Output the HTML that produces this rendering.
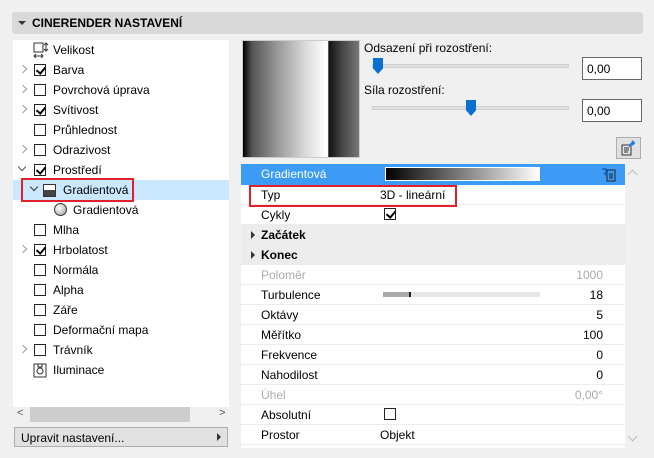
<!DOCTYPE html>
<html><head><meta charset="utf-8"><style>
*{margin:0;padding:0;box-sizing:border-box}
body{width:654px;height:458px;background:#f0f0f0;font-family:"Liberation Sans",sans-serif;font-size:12px;color:#000;position:relative;overflow:hidden}
.a{position:absolute}
.hdr{left:12px;top:12px;width:631px;height:22px;background:#d9d9d9;border-radius:3px}
.hdr span{position:absolute;left:20px;top:4px;font-weight:bold;font-size:12px}
.tri{position:absolute;left:6px;top:9px;width:0;height:0;border-left:4px solid transparent;border-right:4px solid transparent;border-top:4px solid #333}
.tree{left:13px;top:40px;width:216px;height:367px;background:#fff}
.row{position:absolute;left:0;width:216px;height:20px}
.row .t{position:absolute;left:40px;top:3px}
.cb{position:absolute;left:21px;top:4px;width:12px;height:12px;border:1px solid #222;background:#fff}
.cb.c::after{content:"";position:absolute;left:3px;top:0px;width:4px;height:7px;border-right:2px solid #000;border-bottom:2px solid #000;transform:rotate(40deg)}
.ch{position:absolute;left:7px;top:6px;width:6px;height:6px;border-right:1.5px solid #999;border-top:1.5px solid #999;transform:rotate(45deg)}
.ch.d{transform:rotate(135deg);left:6px;top:4px;border-color:#555}
.tbl{left:241px;top:164px;width:384px;height:284px;background:#fff}
.tr{position:absolute;left:0;width:384px;height:20px;border-bottom:1px solid #ececec}
.tr .l{position:absolute;left:20px;top:3px}
.tr .v{position:absolute;right:22px;top:3px}
.tr .m{position:absolute;left:139px;top:3px}
.g{color:#aaa}
.inp{width:60px;height:23px;background:#fff;border:1px solid #666}
.inp span{position:absolute;left:4px;top:4px}
.track{height:4px;background:#e0e0e0;border:1px solid #d0d0d0}
.thumb{width:10px;height:16px;background:#0a6fcf;clip-path:polygon(0 0,100% 0,100% 65%,50% 100%,0 65%)}
</style></head><body>
<div class="a hdr"><div class="tri"></div><span>CINERENDER NASTAVENÍ</span></div>

<div class="a tree">
 <div class="row" style="top:0"><svg class="a" style="left:20px;top:2px" width="16" height="16"><rect x="1" y="1" width="9" height="9" fill="none" stroke="#333"/><path d="M13 1v8M11 3l2-2 2 2M11 7l2 2 2-2M1 14h9M3 12l-2 2 2 2M8 12l2 2-2 2" stroke="#333" fill="none"/></svg><span class="t">Velikost</span></div>
 <div class="row" style="top:20px"><div class="ch"></div><div class="cb c"></div><span class="t">Barva</span></div>
 <div class="row" style="top:40px"><div class="ch"></div><div class="cb"></div><span class="t">Povrchová úprava</span></div>
 <div class="row" style="top:60px"><div class="ch"></div><div class="cb c"></div><span class="t">Svítivost</span></div>
 <div class="row" style="top:80px"><div class="cb"></div><span class="t">Průhlednost</span></div>
 <div class="row" style="top:100px"><div class="ch"></div><div class="cb"></div><span class="t">Odrazivost</span></div>
 <div class="row" style="top:120px"><div class="ch d"></div><div class="cb c"></div><span class="t">Prostředí</span></div>
 <div class="row" style="top:140px;background:#cce8ff"><div class="ch d" style="left:18px;border-color:#333"></div><div class="a" style="left:30px;top:4px;width:13px;height:13px;border:1px solid #333;background:linear-gradient(#fff 45%,#444 45%)"></div><span class="t" style="left:50px">Gradientová</span></div>
 <div class="a" style="left:8px;top:138px;width:113px;height:24px;border:2px solid #e0212a"></div>
 <div class="row" style="top:160px"><div class="a" style="left:41px;top:3px;width:13px;height:13px;border-radius:50%;border:1px solid #333;background:radial-gradient(circle at 35% 35%,#fff,#999)"></div><span class="t" style="left:60px">Gradientová</span></div>
 <div class="row" style="top:180px"><div class="cb"></div><span class="t">Mlha</span></div>
 <div class="row" style="top:200px"><div class="ch"></div><div class="cb c"></div><span class="t">Hrbolatost</span></div>
 <div class="row" style="top:220px"><div class="cb"></div><span class="t">Normála</span></div>
 <div class="row" style="top:240px"><div class="cb"></div><span class="t">Alpha</span></div>
 <div class="row" style="top:260px"><div class="cb"></div><span class="t">Záře</span></div>
 <div class="row" style="top:280px"><div class="cb"></div><span class="t">Deformační mapa</span></div>
 <div class="row" style="top:300px"><div class="ch"></div><div class="cb"></div><span class="t">Trávník</span></div>
 <div class="row" style="top:320px"><svg class="a" style="left:20px;top:2px" width="14" height="16"><rect x="1" y="2" width="12" height="13" fill="none" stroke="#333"/><circle cx="7" cy="9" r="3" fill="none" stroke="#333"/><path d="M5 2v3h4V2" stroke="#333" fill="none"/></svg><span class="t">Iluminace</span></div>
</div>
<div class="a" style="left:13px;top:407px;width:216px;height:15px;background:#f0f0f0"></div>
<div class="a" style="left:30px;top:407px;width:160px;height:15px;background:#cdcdcd"></div>
<div class="a" style="left:17px;top:407px;color:#555;font-size:11px">&lt;</div>
<div class="a" style="left:219px;top:407px;color:#555;font-size:11px">&gt;</div>
<div class="a" style="left:14px;top:427px;width:214px;height:20px;background:#e1e1e1;border:1px solid #adadad"><span class="a" style="left:6px;top:3px">Upravit nastavení...</span><div class="a" style="right:6px;top:5px;border-top:4px solid transparent;border-bottom:4px solid transparent;border-left:4px solid #333"></div></div>

<div class="a" style="left:242px;top:40px;width:118px;height:118px;background:linear-gradient(90deg,#000 0%,#555 8%,#999 30%,#ddd 55%,#fff 72%,#fff 73%,#111 74%,#444 85%,#777 100%);border:1px solid #ccc"></div>
<div class="a" style="left:364px;top:41px">Odsazení při rozostření:</div>
<div class="a track" style="left:372px;top:64px;width:197px"></div>
<div class="a thumb" style="left:373px;top:58px"></div>
<div class="a inp" style="left:582px;top:57px"><span>0,00</span></div>
<div class="a" style="left:364px;top:83px">Síla rozostření:</div>
<div class="a track" style="left:372px;top:106px;width:197px"></div>
<div class="a thumb" style="left:466px;top:100px"></div>
<div class="a inp" style="left:582px;top:99px"><span>0,00</span></div>
<div class="a" style="left:616px;top:137px;width:25px;height:22px;background:#e1e1e1;border:1px solid #adadad"><svg class="a" style="left:4px;top:2px" width="17" height="17"><rect x="1" y="5" width="9" height="10" fill="none" stroke="#333"/><path d="M3 8h5M3 10h5M3 12h4" stroke="#333"/><path d="M9 7q0-4 4-4M11 1l2 2-2 2" stroke="#1a7fe0" stroke-width="2" fill="none"/></svg></div>

<div class="a tbl">
 <div class="tr" style="top:0;background:#3c9cf5;border:0;height:21px"><span class="l" style="color:#fff">Gradientová</span><div class="a" style="left:144px;top:3px;width:155px;height:14px;background:linear-gradient(90deg,#000,#fff);border:1px solid #fff"></div><svg class="a" style="left:360px;top:2px" width="16" height="16"><rect x="6" y="4" width="8" height="11" fill="none" stroke="#222"/><path d="M8 8h4M8 10h4M8 12h4" stroke="#222"/><path d="M1 3h4v6M3 7l2 2 2-2" stroke="#1a5fc0" stroke-width="1.5" fill="none"/></svg></div>
 <div class="tr" style="top:21px"><span class="l">Typ</span><span class="m">3D - lineární</span></div>
 <div class="tr" style="top:41px"><span class="l">Cykly</span><div class="cb c" style="left:143px;top:3px"></div></div>
 <div class="tr" style="top:61px;background:#ececec"><div class="a" style="left:10px;top:6px;border-top:4px solid transparent;border-bottom:4px solid transparent;border-left:4px solid #333"></div><span class="l" style="font-weight:bold">Začátek</span></div>
 <div class="tr" style="top:81px;background:#ececec"><div class="a" style="left:10px;top:6px;border-top:4px solid transparent;border-bottom:4px solid transparent;border-left:4px solid #333"></div><span class="l" style="font-weight:bold">Konec</span></div>
 <div class="tr" style="top:101px"><span class="l g">Poloměr</span><span class="v g">1000</span></div>
 <div class="tr" style="top:121px"><span class="l">Turbulence</span><div class="a" style="left:142px;top:7px;width:157px;height:5px;background:#e6e6e6"></div><div class="a" style="left:142px;top:7px;width:28px;height:5px;background:#aaa;border-right:2px solid #222"></div><span class="v">18</span></div>
 <div class="tr" style="top:141px"><span class="l">Oktávy</span><span class="v">5</span></div>
 <div class="tr" style="top:161px"><span class="l">Měřítko</span><span class="v">100</span></div>
 <div class="tr" style="top:181px"><span class="l">Frekvence</span><span class="v">0</span></div>
 <div class="tr" style="top:201px"><span class="l">Nahodilost</span><span class="v">0</span></div>
 <div class="tr" style="top:221px"><span class="l g">Úhel</span><span class="v g">0,00°</span></div>
 <div class="tr" style="top:241px"><span class="l">Absolutní</span><div class="cb" style="left:143px;top:3px"></div></div>
 <div class="tr" style="top:261px"><span class="l">Prostor</span><span class="m">Objekt</span></div>
</div>
<div class="a" style="left:249px;top:185px;width:208px;height:22px;border:2px solid #e0212a"></div>
<div class="a" style="left:629px;top:171px;width:7px;height:7px;border-left:1.5px solid #bbb;border-top:1.5px solid #bbb;transform:rotate(45deg)"></div>
<div class="a" style="left:629px;top:433px;width:7px;height:7px;border-right:1.5px solid #bbb;border-bottom:1.5px solid #bbb;transform:rotate(45deg)"></div>
</body></html>
